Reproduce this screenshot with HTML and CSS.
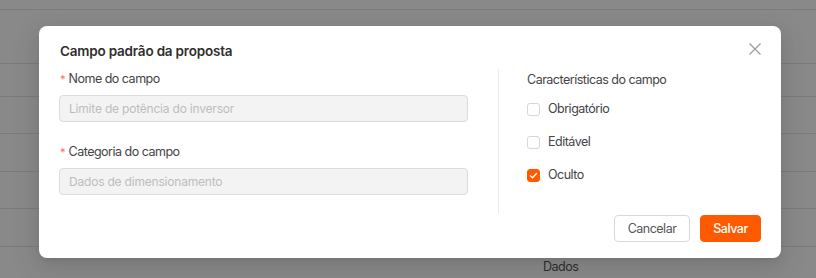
FILE: index.html
```html
<!DOCTYPE html>
<html lang="pt">
<head>
<meta charset="utf-8">
<link rel="stylesheet" href="styles.css">
</head>
<body>
<div class="table">
  <div class="row r0"></div>
  <div class="row r1"></div>
  <div class="row r2"></div>
  <div class="row r3"></div>
  <div class="row r4"></div>
  <div class="row r5"></div>
  <div class="row r6"></div>
  <div class="row r7"><span class="cell">Dados</span></div>
</div>

<div class="modal">
  <div class="modal-header">
    <h2 class="title">Campo padrão da proposta</h2>
    <button class="close" aria-label="Fechar">
      <svg width="12" height="12" viewBox="0 0 12 12"><path d="M0.5 0.5 L11.5 11.5 M11.5 0.5 L0.5 11.5" stroke="#9a9a9a" stroke-width="1.2" fill="none"/></svg>
    </button>
  </div>
  <div class="modal-body">
    <div class="col-left">
      <div class="field">
        <label class="label"><span class="req">*</span>Nome do campo</label>
        <input class="input" placeholder="Limite de potência do inversor" disabled>
      </div>
      <div class="field">
        <label class="label"><span class="req">*</span>Categoria do campo</label>
        <input class="input" placeholder="Dados de dimensionamento" disabled>
      </div>
    </div>
    <div class="divider"></div>
    <div class="col-right">
      <div class="label plain">Características do campo</div>
      <div class="checks">
        <div class="check"><span class="box"></span>Obrigatório</div>
        <div class="check"><span class="box"></span>Editável</div>
        <div class="check"><span class="box on"><svg width="9" height="7" viewBox="0 0 9 7"><path d="M1 3.4 L3.5 5.8 L8 1" stroke="#fff" stroke-width="1.3" fill="none"/></svg></span>Oculto</div>
      </div>
    </div>
  </div>
  <div class="modal-footer">
    <button class="btn">Cancelar</button>
    <button class="btn primary">Salvar</button>
  </div>
</div>
</body>
</html>
```

FILE: styles.css
```css
* { box-sizing: border-box; }
html, body { margin: 0; padding: 0; }
body {
  width: 816px;
  height: 278px;
  overflow: hidden;
  background: #898989;
  font-family: Inter, "Noto Sans", sans-serif;
  position: relative;
}
.table { display: flex; flex-direction: column; }
.row { border-bottom: 1px solid #7b7b7b; }
.r0 { height: 10px; }
.r1 { height: 54px; }
.r2 { height: 33px; }
.r3 { height: 37px; }
.r4 { height: 38px; }
.r5 { height: 37px; }
.r6 { height: 38px; }
.r7 { border-bottom: none; height: 40px; padding: 8px 0 0 543px; }
.cell { font-size: 12.5px; letter-spacing: -0.5px; color: #2e2e2e; line-height: 18px; }

.modal {
  position: absolute;
  left: 39px;
  top: 26px;
  width: 742px;
  height: 232px;
  background: #fff;
  border-radius: 8px;
  box-shadow: 0 6px 16px rgba(0,0,0,0.08), 0 3px 6px -4px rgba(0,0,0,0.12), 0 9px 28px 8px rgba(0,0,0,0.05);
  padding: 16px 20px 16px 20px;
  display: flex;
  flex-direction: column;
}
.modal-header { display: flex; justify-content: space-between; align-items: flex-start; height: 27px; }
.title { margin: 0; font-size: 13.5px; letter-spacing: -0.2px; font-weight: 600; color: #2f2f2f; line-height: 18px; margin-left: 1px; }
.close { border: none; background: none; padding: 0; margin: 1px 0 0 0; width: 12px; height: 12px; display: flex; }

.modal-body { display: flex; height: 145px; }
.col-left { width: 409px; display: flex; flex-direction: column; gap: 21px; padding-top: 1px; }
.field { display: flex; flex-direction: column; gap: 7px; }
.label { font-size: 12.5px; letter-spacing: -0.5px; color: #444; line-height: 18px; margin-left: 1px; }
.req { color: #ff6b6b; margin-right: 3px; font-size: 11px; letter-spacing: 0; }
.input {
  width: 409px; height: 27px;
  border: 1px solid #dcdcdc; border-radius: 4px;
  background: #f3f3f3;
  padding: 0 9px;
  font-family: inherit; font-size: 12px; letter-spacing: -0.2px; color: #bcbcbc;
}
.input::placeholder { color: #bdbdbd; }
.divider { width: 1px; background: #ececec; margin-left: 30px; }
.col-right { padding-left: 28px; padding-top: 2px; display: flex; flex-direction: column; }
.plain { margin-left: 0; }
.checks { display: flex; flex-direction: column; gap: 15px; margin-top: 11px; }
.check { display: flex; align-items: center; gap: 8px; font-size: 12.5px; letter-spacing: -0.5px; color: #444; line-height: 18px; }
.box { width: 13px; height: 13px; border: 1px solid #d6d6d6; border-radius: 3px; background: #fff; display: flex; align-items: center; justify-content: center; }
.box.on { background: #ff5a00; border-color: #ff5a00; }

.modal-footer { display: flex; justify-content: flex-end; gap: 10px; margin-top: 1px; }
.btn {
  height: 27px; border-radius: 4px; border: 1px solid #d9d9d9; background: #fff;
  font-family: inherit; font-size: 12.5px; letter-spacing: -0.5px; color: #555; padding: 0 12px;
}
.btn:first-child { width: 76px; }
.btn.primary { width: 61px; background: #ff5a00; border-color: #ff5a00; color: #fff; font-weight: 500; }
```
